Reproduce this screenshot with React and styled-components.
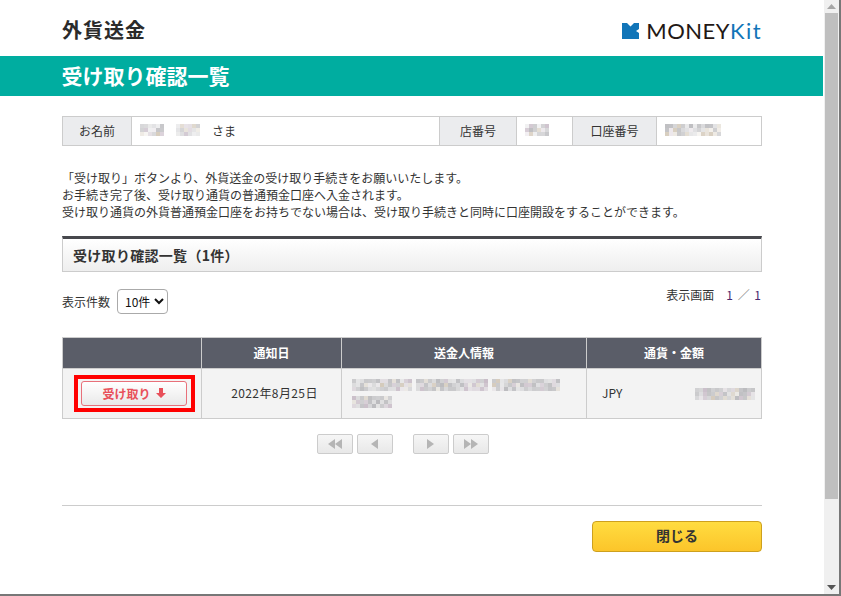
import React from 'react';
import styled, { createGlobalStyle } from 'styled-components';

const GlobalStyle = createGlobalStyle`
  html, body {
    margin: 0;
    padding: 0;
    background: #fff;
    overflow: hidden;
  }
  body {
    font-family: "Noto Sans CJK JP", "Noto Sans", sans-serif;
    font-size: 12px;
    color: #333;
  }
`;

const Frame = styled.div`
  display: flex;
  width: 841px;
  height: 596px;
  box-sizing: border-box;
  border-bottom: 2px solid #777;
  border-right: 2px solid #777;
  overflow: hidden;
`;

const Page = styled.div`
  flex: 1;
  min-width: 0;
`;

const Inner = styled.div`
  width: 700px;
  margin: 0 auto;
`;

const Header = styled(Inner)`
  display: flex;
  justify-content: space-between;
  align-items: center;
  height: 56px;
  padding-top: 4px;
  box-sizing: border-box;
`;

const ServiceName = styled.h1`
  margin: 0;
  font-size: 20px;
  line-height: 28px;
  font-weight: 700;
  letter-spacing: 1px;
  color: #2b2b2b;
`;

const Logo = styled.div`
  display: flex;
  align-items: center;
  gap: 7px;
  margin-top: 2px;
  font-family: "Lato", sans-serif;
  font-size: 22px;
  line-height: 20px;
  color: #231815;
  letter-spacing: 0.5px;
`;

const LogoAccent = styled.span`
  color: #1175b8;
  font-weight: 400;
  letter-spacing: 1.4px;
`;

const Band = styled.div`
  height: 40px;
  background: #00ada0;
  margin-right: 1px;
`;

const BandTitle = styled.h2`
  margin: 0;
  font-size: 21px;
  line-height: 38px;
  font-weight: 700;
  color: #fff;
`;

const InfoRow = styled(Inner)`
  display: grid;
  grid-template-columns: 69px 308px 77px 56px 84px 1fr;
  height: 30px;
  margin-top: 20px;
  box-sizing: border-box;
  border: 1px solid #ccc;
`;

const InfoLabel = styled.div`
  display: flex;
  align-items: center;
  justify-content: center;
  padding-bottom: 2px;
  background: #ebecee;
  border-right: 1px solid #ccc;
`;

const InfoValue = styled.div`
  display: flex;
  align-items: center;
  gap: 12px;
  padding: 0 0 2px 8px;
  border-right: ${(p) => (p.$last ? 'none' : '1px solid #ccc')};
`;

const Notice = styled.p`
  margin: 23px 0 0;
  line-height: 17px;
  color: #333;
`;

const SectionTitle = styled.h3`
  margin: 16px 0 0;
  height: 36px;
  box-sizing: border-box;
  padding-left: 10px;
  border: 1px solid #ccc;
  border-top: 3px solid #47484d;
  background: linear-gradient(#fff, #eee);
  font-size: 14px;
  line-height: 32px;
  font-weight: 700;
  letter-spacing: 0.3px;
  color: #333;
`;

const ControlRow = styled.div`
  display: flex;
  justify-content: space-between;
  align-items: flex-start;
  margin-top: 14px;
  height: 51px;
`;

const PerPage = styled.label`
  display: flex;
  align-items: center;
  gap: 7px;
  margin-top: 3px;
`;

const PerPageSelect = styled.select`
  width: 51px;
  height: 25px;
  border: 1px solid #aaa;
  border-radius: 4px;
  background: #fff;
  color: #111;
  font-family: inherit;
  font-size: 12px;
  padding: 0 0 0 3px;
`;

const PageInfo = styled.div`
  line-height: 18px;
  display: flex;
  gap: 12px;
`;

const PageNumbers = styled.span`
  color: #4a2a6e;
  letter-spacing: 1px;
`;

const PageSlash = styled.span`
  color: #888;
`;

const Table = styled.table`
  width: 699px;
  border-collapse: collapse;
  table-layout: fixed;
`;

const Th = styled.th`
  height: 28px;
  padding: 0 0 2px;
  background: #5a5d68;
  border: 1px solid #ccc;
  color: #fff;
  font-size: 12px;
  font-weight: 700;
`;

const Td = styled.td`
  height: 49px;
  padding: 0;
  background: #f3f3f3;
  border: 1px solid #ccc;
  text-align: center;
`;

const ActionCell = styled(Td)`
  padding-left: 5px;
`;

const DateCell = styled(Td)`
  height: 46px;
  padding: 0 0 3px 6px;
  letter-spacing: 0.4px;
`;

const AddressLines = styled.div`
  display: flex;
  flex-direction: column;
  gap: 5px;
  padding-left: 10px;
`;

const AddressLine = styled.div`
  display: flex;
  gap: 4px;
`;

const AmountCell = styled.div`
  display: flex;
  align-items: center;
  justify-content: space-between;
  padding: 0 6px 0 15px;
`;

const Currency = styled.span`
  margin-bottom: 2px;
`;

const Highlight = styled.div`
  display: inline-block;
  padding: 2px 4px 2px 3px;
  border: 4px solid #f00;
  vertical-align: middle;
`;

const ReceiveButton = styled.button`
  display: flex;
  align-items: center;
  justify-content: center;
  gap: 5px;
  width: 106px;
  height: 25px;
  padding: 0 0 1px;
  border: 1px solid #e8707a;
  border-radius: 3px;
  background: linear-gradient(#fff, #e9e9e9);
  color: #e8505a;
  font-family: inherit;
  font-size: 12px;
  font-weight: 700;
`;

const Pager = styled.div`
  display: flex;
  justify-content: center;
  margin-top: 15px;
  gap: 4px;
  padding-right: 19px;
`;

const PagerButton = styled.button`
  display: flex;
  align-items: center;
  justify-content: center;
  width: 36px;
  height: 20px;
  padding: 0;
  margin-left: ${(p) => (p.$gap ? '16px' : '0')};
  border: 1px solid #ccc;
  border-radius: 2px;
  background: linear-gradient(#f6f6f6, #e8e8e8);
`;

const Rule = styled.hr`
  margin: 51px 0 0;
  border: 0;
  border-top: 1px solid #ccc;
`;

const Footer = styled.div`
  display: flex;
  justify-content: flex-end;
  margin-top: 15px;
`;

const CloseButton = styled.button`
  width: 170px;
  height: 31px;
  padding: 0 0 3px;
  border: 1px solid #cda01e;
  border-radius: 4px;
  background: linear-gradient(#ffdc40, #fcc52a);
  color: #333;
  font-family: inherit;
  font-size: 14px;
  font-weight: 700;
`;

const ScrollBar = styled.div`
  display: flex;
  flex-direction: column;
  align-items: center;
  width: 15px;
  flex: none;
  background: #f0f0f0;
`;

const ScrollArrow = styled.div`
  display: flex;
  align-items: center;
  justify-content: center;
  height: 13px;
  flex: none;
`;

const ScrollThumb = styled.div`
  width: 13px;
  height: 486px;
  background: #bfbfbf;
`;

const ScrollRest = styled.div`
  flex: 1;
`;

const MosaicSvg = styled.svg`
  display: block;
  flex: none;
  filter: blur(0.5px);
`;

// pixelated stand-in for the censored personal data
const Mosaic = ({ cols, rows = 3, seed = 1 }) => {
  const cells = [];
  let n = seed * 7919;
  for (let y = 0; y < rows; y++) {
    for (let x = 0; x < cols; x++) {
      n = (n * 1103515245 + 12345) % 2147483648;
      const tone = (n >> 8) % 100;
      const tint = (n >> 16) % 5;
      const fill = tint === 0 ? '#b9a9b8' : tint === 1 ? '#c9bca8' : '#a8a8ac';
      cells.push(
        <rect key={`${x}-${y}`} x={x * 4} y={y * 4} width="4" height="4" fill={fill} opacity={0.15 + (tone / 100) * 0.6} />
      );
    }
  }
  return (
    <MosaicSvg width={cols * 4} height={rows * 4}>
      {cells}
    </MosaicSvg>
  );
};

const LogoMark = () => (
  <svg width="17" height="16" viewBox="0 0 17 16">
    <path d="M0 0H5L8.5 3.5L12 0H17V6L14 8L17 10V16H0Z" fill="#1175b8" />
  </svg>
);

const DownArrow = () => (
  <svg width="10" height="10" viewBox="0 0 10 10">
    <path d="M3 0H7V5H10L5 10L0 5H3Z" fill="currentColor" />
  </svg>
);

const Triangles = ({ dir, count }) => (
  <svg width={count === 2 ? 14 : 7} height="10" viewBox={`0 0 ${count === 2 ? 14 : 7} 10`}>
    {Array.from({ length: count }).map((_, i) => (
      <path
        key={i}
        transform={`translate(${i * 7} 0)`}
        d={dir === 'left' ? 'M7 0V10L0 5Z' : 'M0 0V10L7 5Z'}
        fill="#b5b5b5"
      />
    ))}
  </svg>
);

const ScrollTriangle = ({ up }) => (
  <svg width="9" height="5" viewBox="0 0 9 5">
    <path d={up ? 'M4.5 0L9 5H0Z' : 'M0 0H9L4.5 5Z'} fill={up ? '#a6a6a6' : '#555'} />
  </svg>
);

export default function App() {
  return (
    <Frame>
      <GlobalStyle />
      <Page>
        <Header>
          <ServiceName>外貨送金</ServiceName>
          <Logo>
            <LogoMark />
            <span>
              MONEY<LogoAccent>Kit</LogoAccent>
            </span>
          </Logo>
        </Header>
        <Band>
          <Inner>
            <BandTitle>受け取り確認一覧</BandTitle>
          </Inner>
        </Band>
        <InfoRow>
          <InfoLabel>お名前</InfoLabel>
          <InfoValue>
            <Mosaic cols={6} seed={3} />
            <Mosaic cols={6} seed={5} />
            <span>さま</span>
          </InfoValue>
          <InfoLabel>店番号</InfoLabel>
          <InfoValue>
            <Mosaic cols={6} seed={8} />
          </InfoValue>
          <InfoLabel>口座番号</InfoLabel>
          <InfoValue $last>
            <Mosaic cols={14} seed={11} />
          </InfoValue>
        </InfoRow>
        <Inner>
          <Notice>
            「受け取り」ボタンより、外貨送金の受け取り手続きをお願いいたします。
            <br />
            お手続き完了後、受け取り通貨の普通預金口座へ入金されます。
            <br />
            受け取り通貨の外貨普通預金口座をお持ちでない場合は、受け取り手続きと同時に口座開設をすることができます。
          </Notice>
          <SectionTitle>受け取り確認一覧（1件）</SectionTitle>
          <ControlRow>
            <PerPage>
              表示件数
              <PerPageSelect defaultValue="10">
                <option value="10">10件</option>
              </PerPageSelect>
            </PerPage>
            <PageInfo>
              <span>表示画面</span>
              <PageNumbers>
                1 <PageSlash>／</PageSlash> 1
              </PageNumbers>
            </PageInfo>
          </ControlRow>
          <Table>
            <colgroup>
              <col width="139" />
              <col width="140" />
              <col width="245" />
              <col width="175" />
            </colgroup>
            <thead>
              <tr>
                <Th />
                <Th>通知日</Th>
                <Th>送金人情報</Th>
                <Th>通貨・金額</Th>
              </tr>
            </thead>
            <tbody>
              <tr>
                <ActionCell>
                  <Highlight>
                    <ReceiveButton>
                      受け取り
                      <DownArrow />
                    </ReceiveButton>
                  </Highlight>
                </ActionCell>
                <DateCell>2022年8月25日</DateCell>
                <Td>
                  <AddressLines>
                    <AddressLine>
                      <Mosaic cols={15} seed={13} />
                      <Mosaic cols={18} seed={23} />
                      <Mosaic cols={17} seed={29} />
                    </AddressLine>
                    <AddressLine>
                      <Mosaic cols={10} seed={17} />
                    </AddressLine>
                  </AddressLines>
                </Td>
                <Td>
                  <AmountCell>
                    <Currency>JPY</Currency>
                    <Mosaic cols={15} seed={19} />
                  </AmountCell>
                </Td>
              </tr>
            </tbody>
          </Table>
          <Pager>
            <PagerButton>
              <Triangles dir="left" count={2} />
            </PagerButton>
            <PagerButton>
              <Triangles dir="left" count={1} />
            </PagerButton>
            <PagerButton $gap>
              <Triangles dir="right" count={1} />
            </PagerButton>
            <PagerButton>
              <Triangles dir="right" count={2} />
            </PagerButton>
          </Pager>
          <Rule />
          <Footer>
            <CloseButton>閉じる</CloseButton>
          </Footer>
        </Inner>
      </Page>
      <ScrollBar>
        <ScrollArrow>
          <ScrollTriangle up />
        </ScrollArrow>
        <ScrollThumb />
        <ScrollRest />
        <ScrollArrow>
          <ScrollTriangle />
        </ScrollArrow>
      </ScrollBar>
    </Frame>
  );
}
